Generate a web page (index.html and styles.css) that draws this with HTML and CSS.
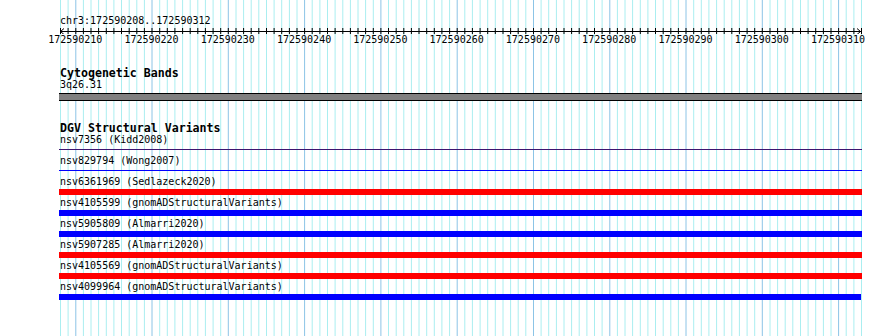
FILE: index.html
```html
<!DOCTYPE html>
<html lang="en">
<head>
  <meta charset="UTF-8">
  <title>chr3:172590208..172590312</title>
  <link rel="stylesheet" href="styles.css">
</head>
<body>
  <div class="view">
    <svg class="grid" id="grid" width="890" height="336"></svg>

    <!-- ruler -->
    <div class="ruler">
      <div class="locus">chr3:172590208..172590312</div>
      <svg class="axis" id="axis" width="890" height="8">
        <line x1="60" y1="5.5" x2="861" y2="5.5" stroke="#000" stroke-width="1"/>
        <polyline points="64,2.5 60.5,5.5 64,8.5" fill="none" stroke="#000" stroke-width="1"/>
        <polyline points="857,2.5 860.5,5.5 857,8.5" fill="none" stroke="#000" stroke-width="1"/>
      </svg>
      <div class="scale-labels">
        <span>172590210</span>
        <span>172590220</span>
        <span>172590230</span>
        <span>172590240</span>
        <span>172590250</span>
        <span>172590260</span>
        <span>172590270</span>
        <span>172590280</span>
        <span>172590290</span>
        <span>172590300</span>
        <span>172590310</span>
      </div>
    </div>

    <!-- cytoband track -->
    <div class="track cyto">
      <div class="track-title">Cytogenetic Bands</div>
      <div class="feature-label">3q26.31</div>
      <div class="band"></div>
    </div>

    <!-- DGV track -->
    <div class="track dgv">
      <div class="track-title">DGV Structural Variants</div>
      <div class="feature">
        <div class="feature-label">nsv7356 (Kidd2008)</div>
        <div class="bar thin purple"></div>
      </div>
      <div class="feature">
        <div class="feature-label">nsv829794 (Wong2007)</div>
        <div class="bar thin blue"></div>
      </div>
      <div class="feature">
        <div class="feature-label">nsv6361969 (Sedlazeck2020)</div>
        <div class="bar red"></div>
      </div>
      <div class="feature">
        <div class="feature-label">nsv4105599 (gnomADStructuralVariants)</div>
        <div class="bar blue"></div>
      </div>
      <div class="feature">
        <div class="feature-label">nsv5905809 (Almarri2020)</div>
        <div class="bar blue"></div>
      </div>
      <div class="feature">
        <div class="feature-label">nsv5907285 (Almarri2020)</div>
        <div class="bar red"></div>
      </div>
      <div class="feature">
        <div class="feature-label">nsv4105569 (gnomADStructuralVariants)</div>
        <div class="bar red"></div>
      </div>
      <div class="feature">
        <div class="feature-label">nsv4099964 (gnomADStructuralVariants)</div>
        <div class="bar blue short"></div>
      </div>
    </div>
  </div>

  <script src="script.js"></script>
</body>
</html>
```

FILE: styles.css
```css
body {
  margin: 0;
  background: #fff;
  font-family: "DejaVu Sans Mono", "Liberation Mono", monospace;
  font-size: 10px;
  color: #000;
}
.view {
  position: relative;
  width: 890px;
  height: 336px;
  overflow: hidden;
}
.grid {
  position: absolute;
  left: 0;
  top: 0;
  z-index: 0;
}
.ruler,
.track {
  position: relative;
  z-index: 1;
}
.ruler {
  padding-top: 16px;
}
.locus {
  padding-left: 60px;
  line-height: 10px;
}
.axis {
  display: block;
}
.scale-labels {
  display: flex;
  padding-left: 37.1px;
  line-height: 12px;
  white-space: nowrap;
}
.scale-labels span {
  flex: 0 0 76.29px;
  text-align: center;
}
.track {
  margin-left: 59px;
  width: 803px;
}
.cyto {
  margin-top: 22px;
}
.dgv {
  margin-top: 22px;
}
.track-title {
  padding-left: 1px;
  font-weight: bold;
  font-size: 11.6px;
  line-height: 11px;
}
.feature-label {
  padding-left: 1px;
  line-height: 11px;
  white-space: nowrap;
}
.band {
  margin-top: 3px;
  height: 6px;
  background: #808080;
  border-top: 1px solid #000;
  border-bottom: 1px solid #000;
}
.feature {
  height: 21px;
}
.bar {
  margin-top: 2px;
  height: 6px;
}
.bar.thin {
  margin-top: 4px;
  height: 1px;
}
.bar.short {
  width: 802px;
}
.red {
  background: #ff0000;
}
.blue {
  background: #0000ff;
}
.purple {
  background: #3c1470;
}
```

FILE: script.js
```js
// grid lines + ruler ticks, one per base
const NS = 'http://www.w3.org/2000/svg';
const start = 172590208;
const bases = 105;
const x0 = 60;
const step = 801 / bases;

const grid = document.getElementById('grid');
const axis = document.getElementById('axis');

for (let k = 0; k <= bases; k++) {
  const x = Math.round((x0 + k * step) * 10) / 10 + 0.5;
  const major = (start + k) % 10 === 0;

  const g = document.createElementNS(NS, 'line');
  g.setAttribute('x1', x);
  g.setAttribute('x2', x);
  g.setAttribute('y1', 0);
  g.setAttribute('y2', 336);
  g.setAttribute('stroke', major ? '#8cc4e6' : '#aaeef0');
  g.setAttribute('stroke-width', 1);
  grid.appendChild(g);

  const t = document.createElementNS(NS, 'line');
  t.setAttribute('x1', x);
  t.setAttribute('x2', x);
  t.setAttribute('y1', 2);
  t.setAttribute('y2', 8);
  t.setAttribute('stroke', '#000');
  t.setAttribute('stroke-width', 1);
  axis.appendChild(t);
}
```
